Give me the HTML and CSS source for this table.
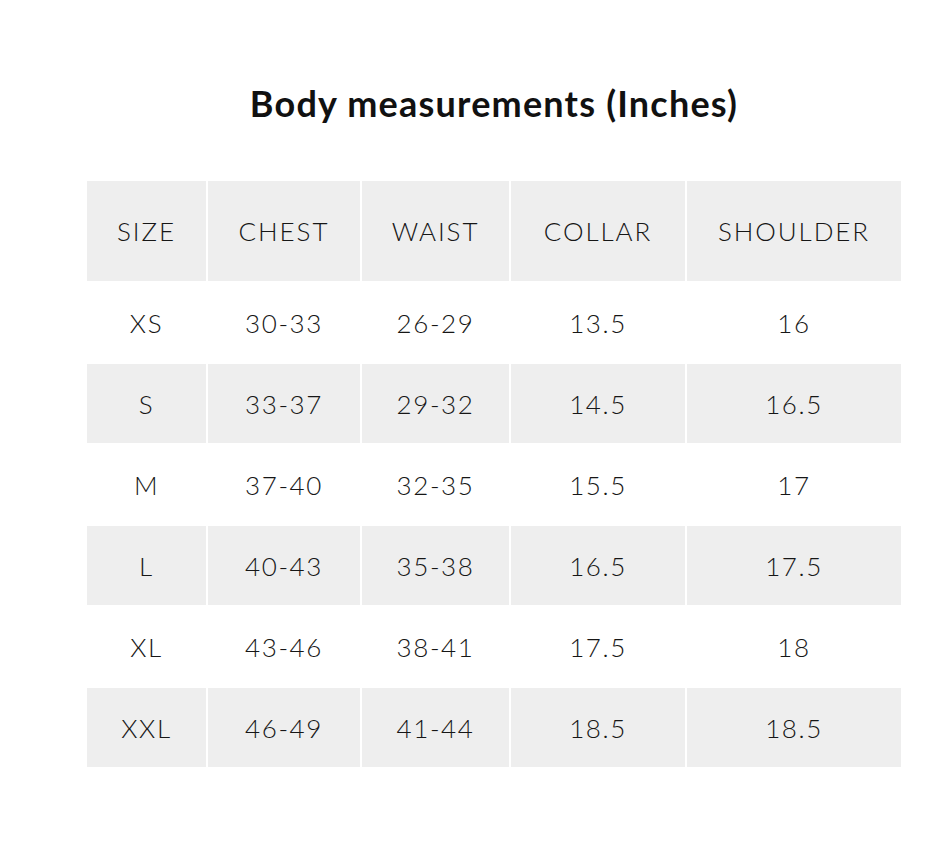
FILE: index.html
```html
<!DOCTYPE html>
<html lang="en">
<head>
<meta charset="utf-8">
<title>Body measurements</title>
<link rel="stylesheet" href="styles.css">
</head>
<body>
<main class="page">
  <h1 class="title">Body measurements (Inches)</h1>
  <table class="sizes">
    <colgroup>
      <col class="c-size">
      <col class="c-chest">
      <col class="c-waist">
      <col class="c-collar">
      <col class="c-shoulder">
    </colgroup>
    <thead>
      <tr class="head">
        <th>SIZE</th><th>CHEST</th><th>WAIST</th><th>COLLAR</th><th>SHOULDER</th>
      </tr>
    </thead>
    <tbody>
      <tr><td>XS</td><td>30-33</td><td>26-29</td><td>13.5</td><td>16</td></tr>
      <tr class="shade"><td>S</td><td>33-37</td><td>29-32</td><td>14.5</td><td>16.5</td></tr>
      <tr><td>M</td><td>37-40</td><td>32-35</td><td>15.5</td><td>17</td></tr>
      <tr class="shade"><td>L</td><td>40-43</td><td>35-38</td><td>16.5</td><td>17.5</td></tr>
      <tr><td>XL</td><td>43-46</td><td>38-41</td><td>17.5</td><td>18</td></tr>
      <tr class="shade"><td>XXL</td><td>46-49</td><td>41-44</td><td>18.5</td><td>18.5</td></tr>
    </tbody>
  </table>
</main>
</body>
</html>
```

FILE: styles.css
```css
html, body {
  margin: 0;
  padding: 0;
  background: #ffffff;
}

body {
  font-family: Lato, "Noto Sans", "DejaVu Sans", sans-serif;
  color: #161616;
}

.page {
  width: 818px;
  padding: 82px 0 0 85px;
}

.title {
  margin: 0;
  text-align: center;
  font-size: 36px;
  line-height: 42px;
  font-weight: 700;
  color: #111111;
  letter-spacing: 1.2px;
}

.sizes {
  margin-top: 55px;
  width: 818px;
  table-layout: fixed;
  border-collapse: separate;
  border-spacing: 2px;
}

.c-size { width: 119px; }
.c-chest { width: 152px; }
.c-waist { width: 147px; }
.c-collar { width: 174px; }
.c-shoulder { width: 214px; }

.sizes th,
.sizes td {
  padding: 0;
  text-align: center;
  vertical-align: middle;
  font-weight: 300;
  font-size: 26px;
  color: #161616;
}

.sizes th {
  height: 100px;
  letter-spacing: 1.9px;
}

.sizes td {
  height: 79px;
  letter-spacing: 1.6px;
}

.head th,
.shade td {
  background: #eeeeee;
}
```
